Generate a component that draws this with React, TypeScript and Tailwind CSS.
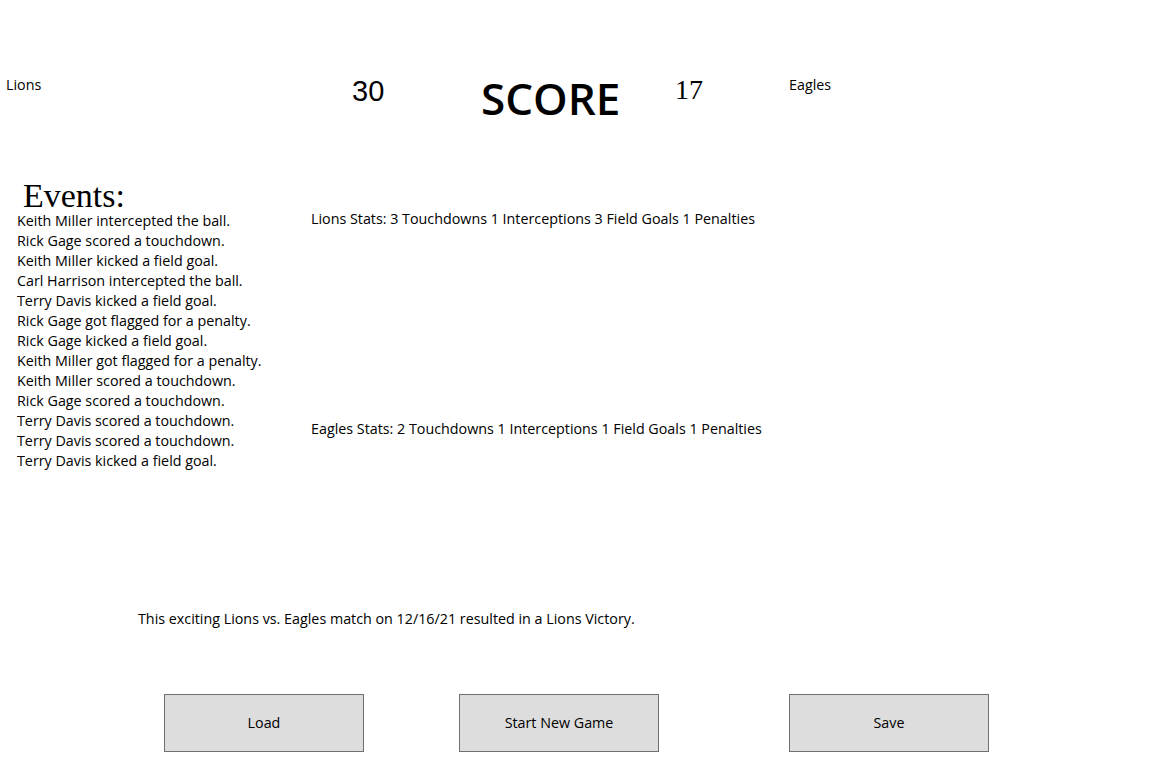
const events = [
  'Keith Miller intercepted the ball.',
  'Rick Gage scored a touchdown.',
  'Keith Miller kicked a field goal.',
  'Carl Harrison intercepted the ball.',
  'Terry Davis kicked a field goal.',
  'Rick Gage got flagged for a penalty.',
  'Rick Gage kicked a field goal.',
  'Keith Miller got flagged for a penalty.',
  'Keith Miller scored a touchdown.',
  'Rick Gage scored a touchdown.',
  'Terry Davis scored a touchdown.',
  'Terry Davis scored a touchdown.',
  'Terry Davis kicked a field goal.',
]

const ui = "font-['Open_Sans',sans-serif] text-[14.3px] leading-[20px] text-black"

function GameButton({ label }: { label: string }) {
  return (
    <button className={`h-[58px] w-[200px] border border-[#707070] bg-[#dddddd] ${ui}`}>
      {label}
    </button>
  )
}

export default function App() {
  return (
    <div className={`h-[763px] w-[1149px] overflow-hidden bg-white ${ui}`}>
      {/* scoreboard */}
      <div className="flex items-start pl-[6px] pt-[75px]">
        <div className="w-[346px]">Lions</div>
        <div className="w-[129px] pt-[2px] font-['Liberation_Sans',sans-serif] text-[29px] leading-none">30</div>
        <div className="w-[194px] pt-[1px] text-[44px] font-semibold leading-none">SCORE</div>
        <div className="w-[114px] pt-[1px] font-['Liberation_Serif',serif] text-[28px] leading-none">17</div>
        <div>Eagles</div>
      </div>

      <div className="mt-[62px] flex items-start">
        <div className="w-[311px] pl-[17px]">
          <div className="h-[29px] pl-[6px] font-['Liberation_Serif',serif] text-[34px] leading-[27px]">Events:</div>
          <ul>
            {events.map((e, i) => (
              <li key={i}>{e}</li>
            ))}
          </ul>
        </div>
        <div className="mt-[27px] flex flex-col gap-[190px]">
          <p>Lions Stats: 3 Touchdowns 1 Interceptions 3 Field Goals 1 Penalties</p>
          <p>Eagles Stats: 2 Touchdowns 1 Interceptions 1 Field Goals 1 Penalties</p>
        </div>
      </div>

      <p className="mt-[138px] pl-[138px]">
        This exciting Lions vs. Eagles match on 12/16/21 resulted in a Lions Victory.
      </p>

      <div className="mt-[65px] flex pl-[164px]">
        <GameButton label="Load" />
        <div className="w-[95px]" />
        <GameButton label="Start New Game" />
        <div className="w-[130px]" />
        <GameButton label="Save" />
      </div>
    </div>
  )
}
